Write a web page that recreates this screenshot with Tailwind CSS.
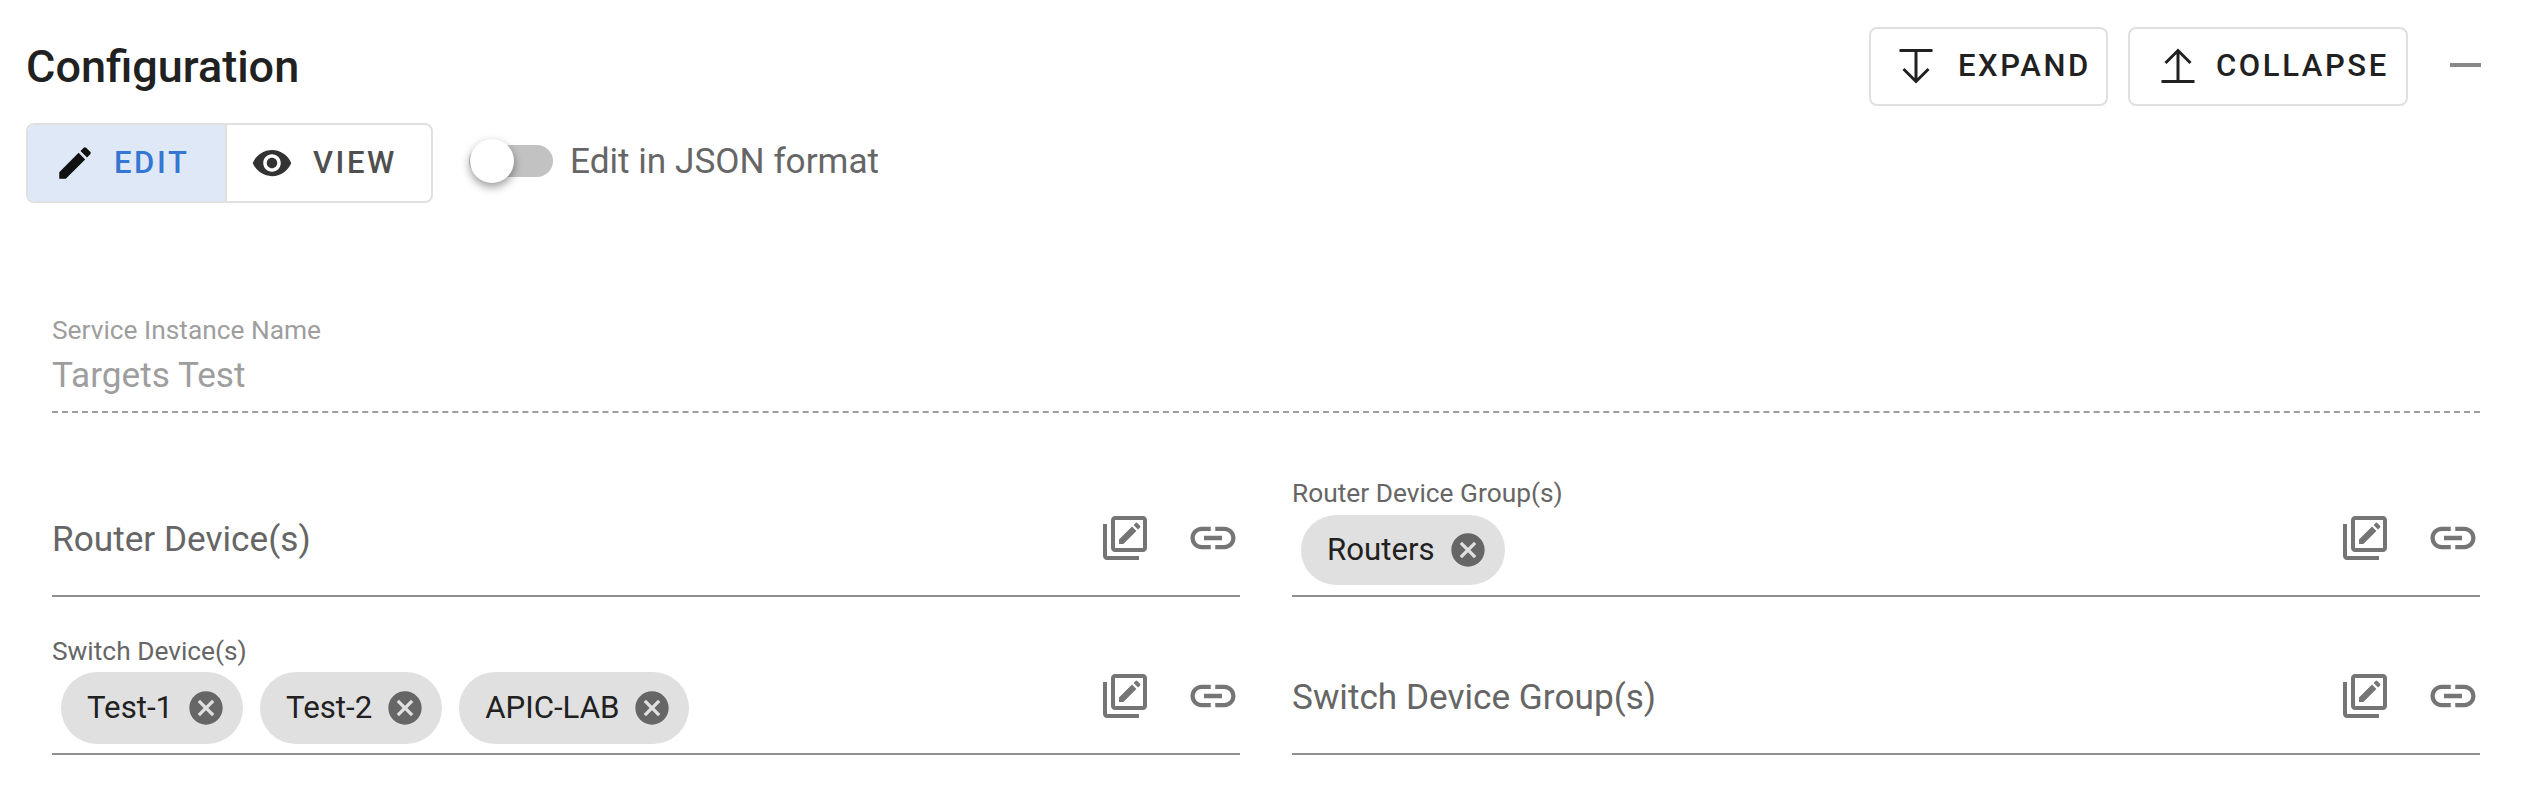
<!DOCTYPE html>
<html lang="en">
<head>
    <meta charset="UTF-8">
    <title>Configuration</title>
    <script src="https://cdn.jsdelivr.net/npm/@tailwindcss/browser@4"></script>
</head>
<body class="bg-white font-['Roboto',sans-serif] h-[812px] overflow-hidden">
    <!-- header -->
    <div class="flex items-center justify-between h-[132px] pl-[26px] pr-[51px]">
        <h1 class="mt-[1px] text-[45px] leading-none font-medium text-[#212121]">Configuration</h1>
        <div class="flex items-center">
            <button class="flex items-center w-[239px] h-[79px] pl-[25px] border-2 border-[#e0e0e0] rounded-[8px] text-[31px] font-medium text-[#212121] tracking-[2.6px]">
                <svg class="w-[40px] h-[40px] mr-[22px]" viewBox="0 0 40 40" fill="none" stroke="#212121" stroke-width="3"><path d="M3.500 4.500h33M20 4.500V35M7.500 23 20 35.500 32.500 23"/></svg>
                EXPAND
            </button>
            <button class="flex items-center w-[280px] h-[79px] ml-[20px] pl-[28px] border-2 border-[#e0e0e0] rounded-[8px] text-[31px] font-medium text-[#212121] tracking-[2.6px]">
                <svg class="w-[40px] h-[40px] mr-[18px]" viewBox="0 0 40 40" fill="none" stroke="#212121" stroke-width="3"><path d="M3.500 35.500h33M20 35.500V5M7.500 17 20 4.500 32.500 17"/></svg>
                COLLAPSE
            </button>
            <div class="w-[31px] h-[4px] ml-[42px] -mt-[2px] bg-[#888888]"></div>
        </div>
    </div>

    <!-- edit / view -->
    <div class="flex items-center h-[80px] pl-[26px] -mt-[9px]">
        <div class="flex w-[407px] h-[80px] border-2 border-[#e0e0e0] rounded-[8px] overflow-hidden text-[31px] font-medium tracking-[2.6px]">
            <div class="flex items-center w-[199px] pl-[26px] bg-[#dfe8f7] border-r-2 border-[#e0e0e0] text-[#3576d2]">
                <svg class="w-[42px] h-[42px] mr-[18px]" viewBox="0 0 24 24" fill="#111"><path d="M3 17.250V21h3.750L17.810 9.940l-3.750-3.750L3 17.250zM20.710 7.040c.39-.39.39-1.020 0-1.410l-2.340-2.340c-.39-.39-1.020-.39-1.410 0l-1.830 1.830 3.750 3.750 1.830-1.830z"/></svg>
                EDIT
            </div>
            <div class="flex items-center flex-1 pl-[24px] text-[#4f4f4f]">
                <svg class="w-[42px] h-[42px] mr-[20px]" viewBox="0 0 24 24" fill="#333"><path d="M12 4.500C7 4.500 2.730 7.610 1 12c1.730 4.390 6 7.500 11 7.500s9.270-3.110 11-7.500c-1.730-4.390-6-7.500-11-7.500zM12 17c-2.760 0-5-2.240-5-5s2.240-5 5-5 5 2.240 5 5-2.240 5-5 5zm0-8c-1.660 0-3 1.340-3 3s1.340 3 3 3 3-1.340 3-3-1.340-3-3-3z"/></svg>
                VIEW
            </div>
        </div>
        <div class="relative w-[84px] h-[32px] ml-[36px] -mt-[4px] rounded-full bg-[#c2c2c2]">
            <div class="absolute left-[1px] -top-[6px] w-[44px] h-[44px] rounded-full bg-white shadow-[0_4px_10px_rgba(0,0,0,0.4)]"></div>
        </div>
        <span class="ml-[17px] -mt-[4px] text-[35.200px] text-[#666666]">Edit in JSON format</span>
    </div>

    <!-- fields -->
    <div class="px-[52px]">
        <div class="mt-[112px] h-[98px] border-b-2 border-dashed border-[#9e9e9e]">
            <div class="text-[26.300px] leading-[30px] text-[#9e9e9e]">Service Instance Name</div>
            <div class="mt-[10px] text-[35.200px] leading-[40px] text-[#9e9e9e]">Targets Test</div>
        </div>
        <div class="grid grid-cols-2 gap-x-[52px] mt-[12px]">
            <div class="flex items-center justify-between h-[172px] pt-[72px] border-b-2 border-[#8f8f8f]">
                <span class="text-[35.200px] text-[#666666] -mt-[14px]">Router Device(s)</span>
                <div class="flex items-center -mt-[16px] gap-[37px]">
                    <svg class="w-[48px] h-[48px]" viewBox="0 0 24 24" fill="#757575"><path d="M3 5H1v16c0 1.100.9 2 2 2h16v-2H3V5zm18-4H7c-1.100 0-2 .9-2 2v14c0 1.100.9 2 2 2h14c1.100 0 2-.9 2-2V3c0-1.100-.9-2-2-2zm0 16H7V3h14v14zM9 15v-2.200l6.500-6.500 2.200 2.200-6.500 6.500zM16.300 5.500l1-1a.6.6 0 0 1 .85 0l1.350 1.350a.6.6 0 0 1 0 .85l-1 1z"/></svg>
                    <svg class="w-[54px] h-[54px]" viewBox="0 0 24 24" fill="#757575"><path d="M3.900 12c0-1.710 1.390-3.100 3.100-3.100h4V7H7c-2.760 0-5 2.240-5 5s2.240 5 5 5h4v-1.900H7c-1.710 0-3.100-1.390-3.100-3.100zM8 13h8v-2H8v2zm9-6h-4v1.900h4c1.710 0 3.100 1.390 3.100 3.100s-1.390 3.100-3.100 3.100h-4V17h4c2.760 0 5-2.240 5-5s-2.240-5-5-5z"/></svg>
                </div>
            </div>
            <div class="relative flex items-center justify-between h-[172px] pt-[72px] border-b-2 border-[#8f8f8f]">
                <div class="absolute left-0 top-[53px] text-[26.300px] leading-[30px] text-[#666666]">Router Device Group(s)</div>
                <div class="flex gap-[17px] pl-[9px] mt-[8px]">
                    <span class="flex items-center h-[70px] pl-[26px] pr-[17px] rounded-full bg-[#e0e0e0] text-[31.200px] text-[#212121]">Routers
                        <svg class="w-[40px] h-[40px] ml-[13px]" viewBox="0 0 24 24" fill="#666"><path d="M12 2C6.470 2 2 6.470 2 12s4.470 10 10 10 10-4.470 10-10S17.530 2 12 2zm5 13.590L15.590 17 12 13.410 8.410 17 7 15.590 10.590 12 7 8.410 8.410 7 12 10.590 15.590 7 17 8.410 13.410 12 17 15.590z"/></svg>
                    </span>
                </div>
                <div class="flex items-center -mt-[16px] gap-[37px]">
                    <svg class="w-[48px] h-[48px]" viewBox="0 0 24 24" fill="#757575"><path d="M3 5H1v16c0 1.100.9 2 2 2h16v-2H3V5zm18-4H7c-1.100 0-2 .9-2 2v14c0 1.100.9 2 2 2h14c1.100 0 2-.9 2-2V3c0-1.100-.9-2-2-2zm0 16H7V3h14v14zM9 15v-2.200l6.500-6.500 2.200 2.200-6.500 6.500zM16.300 5.500l1-1a.6.6 0 0 1 .85 0l1.350 1.350a.6.6 0 0 1 0 .85l-1 1z"/></svg>
                    <svg class="w-[54px] h-[54px]" viewBox="0 0 24 24" fill="#757575"><path d="M3.900 12c0-1.710 1.390-3.100 3.100-3.100h4V7H7c-2.760 0-5 2.240-5 5s2.240 5 5 5h4v-1.900H7c-1.710 0-3.100-1.390-3.100-3.100zM8 13h8v-2H8v2zm9-6h-4v1.900h4c1.710 0 3.100 1.390 3.100 3.100s-1.390 3.100-3.100 3.100h-4V17h4c2.760 0 5-2.240 5-5s-2.240-5-5-5z"/></svg>
                </div>
            </div>
            <div class="relative flex items-center justify-between h-[158px] pt-[58px] border-b-2 border-[#8f8f8f]">
                <div class="absolute left-0 top-[39px] text-[26.300px] leading-[30px] text-[#666666]">Switch Device(s)</div>
                <div class="flex gap-[17px] pl-[9px] mt-[8px]">
                    <span class="flex items-center h-[72px] pl-[26px] pr-[17px] rounded-full bg-[#e0e0e0] text-[31.200px] text-[#212121]">Test-1
                        <svg class="w-[40px] h-[40px] ml-[13px]" viewBox="0 0 24 24" fill="#666"><path d="M12 2C6.470 2 2 6.470 2 12s4.470 10 10 10 10-4.470 10-10S17.530 2 12 2zm5 13.590L15.590 17 12 13.410 8.410 17 7 15.590 10.590 12 7 8.410 8.410 7 12 10.590 15.590 7 17 8.410 13.410 12 17 15.590z"/></svg>
                    </span>
                    <span class="flex items-center h-[72px] pl-[26px] pr-[17px] rounded-full bg-[#e0e0e0] text-[31.200px] text-[#212121]">Test-2
                        <svg class="w-[40px] h-[40px] ml-[13px]" viewBox="0 0 24 24" fill="#666"><path d="M12 2C6.470 2 2 6.470 2 12s4.470 10 10 10 10-4.470 10-10S17.530 2 12 2zm5 13.590L15.590 17 12 13.410 8.410 17 7 15.590 10.590 12 7 8.410 8.410 7 12 10.590 15.590 7 17 8.410 13.410 12 17 15.590z"/></svg>
                    </span>
                    <span class="flex items-center h-[72px] pl-[26px] pr-[17px] rounded-full bg-[#e0e0e0] text-[31.200px] text-[#212121]">APIC-LAB
                        <svg class="w-[40px] h-[40px] ml-[13px]" viewBox="0 0 24 24" fill="#666"><path d="M12 2C6.470 2 2 6.470 2 12s4.470 10 10 10 10-4.470 10-10S17.530 2 12 2zm5 13.590L15.590 17 12 13.410 8.410 17 7 15.590 10.590 12 7 8.410 8.410 7 12 10.590 15.590 7 17 8.410 13.410 12 17 15.590z"/></svg>
                    </span>
                </div>
                <div class="flex items-center -mt-[16px] gap-[37px]">
                    <svg class="w-[48px] h-[48px]" viewBox="0 0 24 24" fill="#757575"><path d="M3 5H1v16c0 1.100.9 2 2 2h16v-2H3V5zm18-4H7c-1.100 0-2 .9-2 2v14c0 1.100.9 2 2 2h14c1.100 0 2-.9 2-2V3c0-1.100-.9-2-2-2zm0 16H7V3h14v14zM9 15v-2.200l6.500-6.500 2.200 2.200-6.500 6.500zM16.300 5.500l1-1a.6.6 0 0 1 .85 0l1.350 1.350a.6.6 0 0 1 0 .85l-1 1z"/></svg>
                    <svg class="w-[54px] h-[54px]" viewBox="0 0 24 24" fill="#757575"><path d="M3.900 12c0-1.710 1.390-3.100 3.100-3.100h4V7H7c-2.760 0-5 2.240-5 5s2.240 5 5 5h4v-1.900H7c-1.710 0-3.100-1.390-3.100-3.100zM8 13h8v-2H8v2zm9-6h-4v1.900h4c1.710 0 3.100 1.390 3.100 3.100s-1.390 3.100-3.100 3.100h-4V17h4c2.760 0 5-2.240 5-5s-2.240-5-5-5z"/></svg>
                </div>
            </div>
            <div class="flex items-center justify-between h-[158px] pt-[58px] border-b-2 border-[#8f8f8f]">
                <span class="text-[35.200px] text-[#666666] -mt-[14px]">Switch Device Group(s)</span>
                <div class="flex items-center -mt-[16px] gap-[37px]">
                    <svg class="w-[48px] h-[48px]" viewBox="0 0 24 24" fill="#757575"><path d="M3 5H1v16c0 1.100.9 2 2 2h16v-2H3V5zm18-4H7c-1.100 0-2 .9-2 2v14c0 1.100.9 2 2 2h14c1.100 0 2-.9 2-2V3c0-1.100-.9-2-2-2zm0 16H7V3h14v14zM9 15v-2.200l6.500-6.500 2.200 2.200-6.500 6.500zM16.300 5.500l1-1a.6.6 0 0 1 .85 0l1.350 1.350a.6.6 0 0 1 0 .85l-1 1z"/></svg>
                    <svg class="w-[54px] h-[54px]" viewBox="0 0 24 24" fill="#757575"><path d="M3.900 12c0-1.710 1.390-3.100 3.100-3.100h4V7H7c-2.760 0-5 2.240-5 5s2.240 5 5 5h4v-1.900H7c-1.710 0-3.100-1.390-3.100-3.100zM8 13h8v-2H8v2zm9-6h-4v1.900h4c1.710 0 3.100 1.390 3.100 3.100s-1.390 3.100-3.100 3.100h-4V17h4c2.760 0 5-2.240 5-5s-2.240-5-5-5z"/></svg>
                </div>
            </div>
        </div>
    </div>
</body>
</html>
